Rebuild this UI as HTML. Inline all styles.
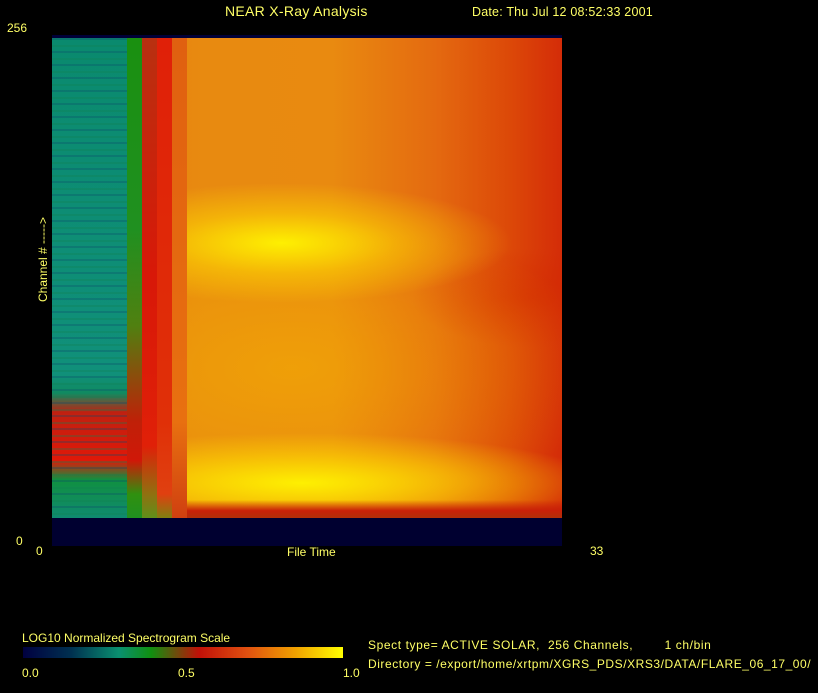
<!DOCTYPE html>
<html><head><style>
body{margin:0;background:#000;width:818px;height:693px;overflow:hidden;position:relative;font-family:"Liberation Sans",sans-serif;color:#ffff66;font-size:12px}
.t{position:absolute;white-space:nowrap}
.a{position:absolute}
</style></head><body>
<div class="t" style="left:225px;top:3px;font-size:14px;letter-spacing:0.3px">NEAR X-Ray Analysis</div>
<div class="t" style="left:472px;top:5px;font-size:12.5px;letter-spacing:0.2px">Date: Thu Jul 12 08:52:33 2001</div>
<div class="t" style="left:7px;top:21px">256</div>
<div class="t" style="left:16px;top:534px">0</div>
<div class="t" style="left:36px;top:544px">0</div>
<div class="t" style="left:590px;top:544px">33</div>
<div class="t" style="left:287px;top:545px">File Time</div>
<div class="t" style="left:36px;top:302px;transform:rotate(-90deg);transform-origin:0 0">Channel # -----&gt;</div>

<div class="a" style="left:52px;top:35px;width:510px;height:3px;background:#000038"></div>
<div class="a" style="left:52px;top:518px;width:510px;height:28px;background:#000030"></div>
<div class="a" style="left:52px;top:38px;width:510px;height:480px;background:linear-gradient(90deg,#e67a10 0,#e88a10 30%,#e98a10 55%,#e46a10 75%,#dc4808 90%,#d42c08 100%)"></div>
<div class="a" style="left:52px;top:38px;width:510px;height:480px;background:
radial-gradient(ellipse 230px 60px at 230px 205px,rgba(255,245,0,.95),rgba(255,220,0,.5) 50%,rgba(255,200,0,0) 100%),
radial-gradient(ellipse 300px 50px at 250px 445px,rgba(255,245,0,.95),rgba(255,220,0,.55) 55%,rgba(255,200,0,0) 100%),
radial-gradient(ellipse 320px 150px at 240px 330px,rgba(245,180,0,.5),rgba(245,180,0,0) 100%),
radial-gradient(ellipse 120px 50px at 480px 260px,rgba(210,40,0,.55),rgba(210,40,0,0) 100%)"></div>
<div class="a" style="left:187px;top:500px;width:375px;height:18px;background:linear-gradient(180deg,rgba(220,40,0,0),#c82008 60%,#b03008)"></div>
<div class="a" style="left:52px;top:38px;width:75px;height:480px;background:linear-gradient(180deg,#0a8a6e 0,#10907a 70%,#108a60 74%,#c02010 78%,#e01808 88%,#109040 92%,#0f8a70 100%)"></div>
<div class="a" style="left:52px;top:38px;width:75px;height:480px;opacity:.3;background:repeating-linear-gradient(180deg,#0a4a6a 0 2px,transparent 2px 7px,#108050 7px 9px,transparent 9px 13px)"></div>
<div class="a" style="left:127px;top:38px;width:15px;height:480px;background:linear-gradient(180deg,#1a9010 0,#209020 40%,#508010 60%,#c02008 80%,#d01808 88%,#30900f 95%,#209020 100%)"></div>
<div class="a" style="left:142px;top:38px;width:15px;height:480px;background:linear-gradient(180deg,#b83010 0,#d81808 50%,#e02008 85%,#907010 95%,#60901a 100%)"></div>
<div class="a" style="left:157px;top:38px;width:15px;height:480px;background:linear-gradient(180deg,#e02008 0,#e03008 80%,#e04010 95%,#808010 100%)"></div>
<div class="a" style="left:172px;top:38px;width:15px;height:480px;background:linear-gradient(180deg,#e06010 0,#e87010 80%,#d04010 100%)"></div>

<div class="t" style="left:22px;top:631px">LOG10 Normalized Spectrogram Scale</div>
<div class="a" style="left:23px;top:647px;width:320px;height:11px;background:linear-gradient(90deg,#000040 0,#003050 15%,#0a9070 30%,#109010 40%,#c01008 55%,#e05010 70%,#f0a000 85%,#ffff00 100%)"></div>
<div class="t" style="left:22px;top:666px">0.0</div>
<div class="t" style="left:178px;top:666px">0.5</div>
<div class="t" style="left:343px;top:666px">1.0</div>
<div class="t" style="left:368px;top:638px;letter-spacing:0.6px">Spect type= ACTIVE SOLAR,&nbsp; 256 Channels,&nbsp;&nbsp;&nbsp;&nbsp;&nbsp;&nbsp;&nbsp; 1 ch/bin</div>
<div class="t" style="left:368px;top:657px;letter-spacing:0.55px">Directory = /export/home/xrtpm/XGRS_PDS/XRS3/DATA/FLARE_06_17_00/</div>
</body></html>
